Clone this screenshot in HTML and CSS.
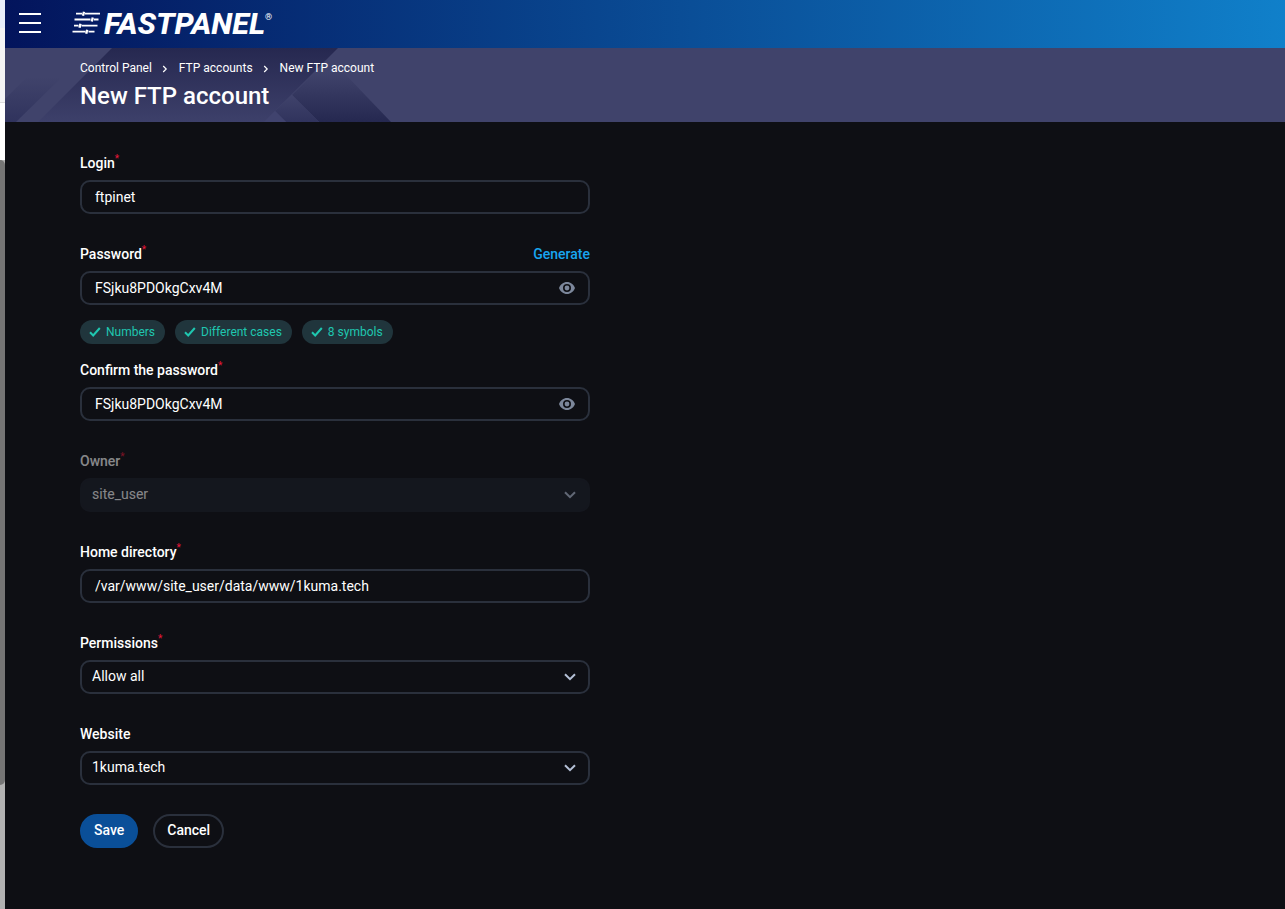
FILE: index.html
```html
<!DOCTYPE html>
<html lang="en">
<head>
    <meta charset="UTF-8">
    <meta name="viewport" content="width=device-width, initial-scale=1.0">
    <title>New FTP account</title>
    <link rel="stylesheet" href="styles.css">
</head>
<body>
    <div class="edge">
        <div class="edge-top"></div>
        <div class="edge-page"></div>
        <div class="edge-scroll"><div class="edge-thumb"></div></div>
    </div>
    <div class="page">
        <header class="topbar">
            <button class="menu" type="button" aria-label="Menu"><span></span><span></span><span></span></button>
            <svg class="logo" width="210" height="28" viewBox="0 0 210 28">
                <g stroke="#fff" stroke-width="1.8" fill="none">
                    <path d="M5 3.700h6M14 3.700h15M3.500 9.500h16M23 9.500h4.500M3 15.700h4.500M10.500 15.700h16M1.500 21.700h13M17.500 21.700h6"/>
                    <path stroke-width="2.4" d="M13 1.700l-1 4M21.800 7.500l-1 4M9.500 13.700l-1 4M16.200 19.700l-1 4"/>
                </g>
                <text class="logo-text" x="33" y="23.600" textLength="161" lengthAdjust="spacingAndGlyphs">FASTPANEL</text>
                <text class="logo-mark" x="194" y="9.500">®</text>
            </svg>
        </header>
        <div class="banner">
            <svg class="banner-art" width="400" height="74" viewBox="0 0 400 74">
                <defs>
                    <linearGradient id="down" x1="0" y1="0" x2="0" y2="1">
                        <stop offset="0" stop-color="#262850"/>
                        <stop offset="1" stop-color="#3d406a"/>
                    </linearGradient>
                    <linearGradient id="up" x1="0" y1="0" x2="0" y2="1">
                        <stop offset="0" stop-color="#40436b"/>
                        <stop offset="1" stop-color="#252850"/>
                    </linearGradient>
                    <linearGradient id="side" x1="0" y1="0" x2="0" y2="1">
                        <stop offset="0" stop-color="#40436b"/>
                        <stop offset="1" stop-color="#30335d"/>
                    </linearGradient>
                </defs>
                <path fill="url(#side)" d="M22 29H57L11 74H0V51z"/>
                <path fill="url(#down)" d="M107 0H333L259 74H33z"/>
                <path fill="url(#up)" d="M310 24H338L386 74H314L287 47z"/>
                <path fill="url(#side)" d="M287 47L314 74H281L270 63z"/>
                <path fill="#40436e" d="M270 63L281 74H259z"/>
            </svg>
            <nav class="crumbs">
                <a>Control Panel</a>
                <svg width="6" height="8" viewBox="0 0 6 8"><path d="M1.200 1l3 3-3 3"/></svg>
                <a>FTP accounts</a>
                <svg width="6" height="8" viewBox="0 0 6 8"><path d="M1.200 1l3 3-3 3"/></svg>
                <a>New FTP account</a>
            </nav>
            <h1>New FTP account</h1>
        </div>

        <form class="form">
            <div class="field">
                <label for="login">Login<i>*</i></label>
                <input class="control" type="text" id="login" value="ftpinet">
            </div>
            <div class="field field-password">
                <div class="label-row">
                    <label for="password">Password<i>*</i></label>
                    <a class="generate">Generate</a>
                </div>
                <div class="control">
                    <input type="text" id="password" value="FSjku8PDOkgCxv4M">
                    <svg class="eye" width="16" height="12" viewBox="0 0 16 12"><path fill-rule="evenodd" d="M8 0C4.400 0 1.300 2.400 0 6c1.300 3.600 4.400 6 8 6s6.700-2.400 8-6C14.700 2.400 11.600 0 8 0zM8 10a4 4 0 1 1 0-8 4 4 0 0 1 0 8zM8 3.600a2.400 2.400 0 1 0 0 4.800 2.400 2.400 0 0 0 0-4.800z"/></svg>
                </div>
                <div class="checks">
                    <span class="check"><svg width="12" height="10" viewBox="0 0 12 10"><path d="M1 5.300l3.200 3.200L10.800 1"/></svg>Numbers</span>
                    <span class="check"><svg width="12" height="10" viewBox="0 0 12 10"><path d="M1 5.300l3.200 3.200L10.800 1"/></svg>Different cases</span>
                    <span class="check"><svg width="12" height="10" viewBox="0 0 12 10"><path d="M1 5.300l3.200 3.200L10.800 1"/></svg>8 symbols</span>
                </div>
            </div>
            <div class="field">
                <label for="confirm">Confirm the password<i>*</i></label>
                <div class="control">
                    <input type="text" id="confirm" value="FSjku8PDOkgCxv4M">
                    <svg class="eye" width="16" height="12" viewBox="0 0 16 12"><path fill-rule="evenodd" d="M8 0C4.400 0 1.300 2.400 0 6c1.300 3.600 4.400 6 8 6s6.700-2.400 8-6C14.700 2.400 11.600 0 8 0zM8 10a4 4 0 1 1 0-8 4 4 0 0 1 0 8zM8 3.600a2.400 2.400 0 1 0 0 4.800 2.400 2.400 0 0 0 0-4.800z"/></svg>
                </div>
            </div>
            <div class="field disabled">
                <label>Owner<i>*</i></label>
                <div class="control select">
                    <span>site_user</span>
                    <svg class="arrow" width="12" height="8" viewBox="0 0 12 8"><path d="M1 1.200l5 5 5-5"/></svg>
                </div>
            </div>
            <div class="field">
                <label for="home">Home directory<i>*</i></label>
                <input class="control" type="text" id="home" value="/var/www/site_user/data/www/1kuma.tech">
            </div>
            <div class="field">
                <label>Permissions<i>*</i></label>
                <div class="control select">
                    <span>Allow all</span>
                    <svg class="arrow" width="12" height="8" viewBox="0 0 12 8"><path d="M1 1.200l5 5 5-5"/></svg>
                </div>
            </div>
            <div class="field">
                <label>Website</label>
                <div class="control select">
                    <span>1kuma.tech</span>
                    <svg class="arrow" width="12" height="8" viewBox="0 0 12 8"><path d="M1 1.200l5 5 5-5"/></svg>
                </div>
            </div>
            <div class="actions">
                <button class="btn btn-save" type="submit">Save</button>
                <button class="btn btn-cancel" type="button">Cancel</button>
            </div>
        </form>
    </div>
</body>
</html>
```
FILE: styles.css
```css
* {
    box-sizing: border-box;
}
body {
    margin: 0;
    display: flex;
    height: 100vh;
    overflow: hidden;
    background: #0e0f14;
    color: #fff;
    font-family: Roboto, "Liberation Sans", sans-serif;
    font-size: 14px;
}
/* strip of the window behind the panel */
.edge {
    display: flex;
    flex-direction: column;
    width: 5px;
    flex: none;
}
.edge-top {
    height: 28px;
    background: #e9eefa;
}
.edge-page {
    height: 132px;
    background: linear-gradient(#f4f4f5 74px, #dcdcdc 74px, #dcdcdc 75px, #fff 75px);
}
.edge-scroll {
    flex: 1;
    background: #b2b2b2;
}
.edge-thumb {
    height: 625px;
    background: #757575;
    border-radius: 0 5px 5px 0;
}
.page {
    flex: 1;
}
.topbar {
    display: flex;
    align-items: center;
    height: 48px;
    padding: 0 14px 2px;
    background: linear-gradient(90deg, #03145c, #1080ca);
}
.menu {
    display: flex;
    flex-direction: column;
    gap: 7px;
    width: 22px;
    padding: 0;
    border: 0;
    background: none;
}
.menu span {
    height: 2px;
    background: #fff;
}
.logo {
    margin: 2px 0 0 30px;
    overflow: visible;
}
.logo-text {
    font-size: 29px;
    font-weight: 800;
    font-style: italic;
    fill: #fff;
}
.logo-mark {
    font-size: 9px;
    fill: #fff;
}
.banner {
    position: relative;
    height: 74px;
    padding: 12px 75px 0;
    background: #40436b;
}
.banner-art {
    position: absolute;
    left: 0;
    top: 0;
}
.crumbs {
    position: relative;
    display: flex;
    align-items: center;
    height: 16px;
    font-size: 12px;
}
.crumbs svg {
    margin: 1px 11px 0 10px;
    fill: none;
    stroke: #fff;
    stroke-width: 1.2;
}
h1 {
    position: relative;
    margin: 4px 0 0;
    font-size: 24px;
    line-height: 32px;
    font-weight: 550;
}
.form {
    width: 585px;
    padding: 31px 0 0 75px;
}
.field {
    margin-bottom: 30px;
}
.field-password {
    margin-bottom: 16px;
}
label, .generate {
    display: block;
    height: 27px;
    line-height: 20px;
    font-weight: 550;
}
label i {
    position: relative;
    top: -6px;
    font-size: 10px;
    line-height: 1;
    font-style: normal;
    font-weight: 400;
    color: #e8173a;
}
.label-row {
    display: flex;
    justify-content: space-between;
}
.generate {
    color: #18a5f0;
}
.control {
    display: flex;
    align-items: center;
    width: 100%;
    height: 34px;
    padding: 0 13px;
    border: 2px solid #2a303c;
    border-radius: 10px;
    background: none;
}
input {
    flex: 1;
    padding: 0;
    border: 0;
    outline: 0;
    background: none;
    color: #fff;
    font: inherit;
}
.eye {
    fill: #7c879b;
}
.select {
    justify-content: space-between;
    padding: 0 12px 0 10px;
}
.select span {
    line-height: 20px;
    padding-bottom: 2px;
}
.arrow {
    fill: none;
    stroke: #b4c0d6;
    stroke-width: 2;
}
.disabled {
    opacity: 0.5;
}
.disabled .control {
    border-color: #1b1f29;
    background: #1b1f29;
}
.checks {
    display: flex;
    gap: 10px;
    margin-top: 15px;
}
.check {
    display: flex;
    align-items: center;
    height: 24px;
    padding: 0 10px 0 9px;
    border-radius: 12px;
    background: #20353c;
    color: #1fc7b0;
    font-size: 12px;
}
.check svg {
    margin-right: 5px;
    fill: none;
    stroke: #1fc7b0;
    stroke-width: 2;
}
.actions {
    display: flex;
    gap: 15px;
    margin-top: -1px;
}
.btn {
    height: 34px;
    padding: 0 12px 2px;
    border: 2px solid #0a4f98;
    border-radius: 17px;
    background: #0a4f98;
    color: #fff;
    font: inherit;
    font-weight: 550;
}
.btn-cancel {
    border-color: #2a303c;
    background: none;
}
```
